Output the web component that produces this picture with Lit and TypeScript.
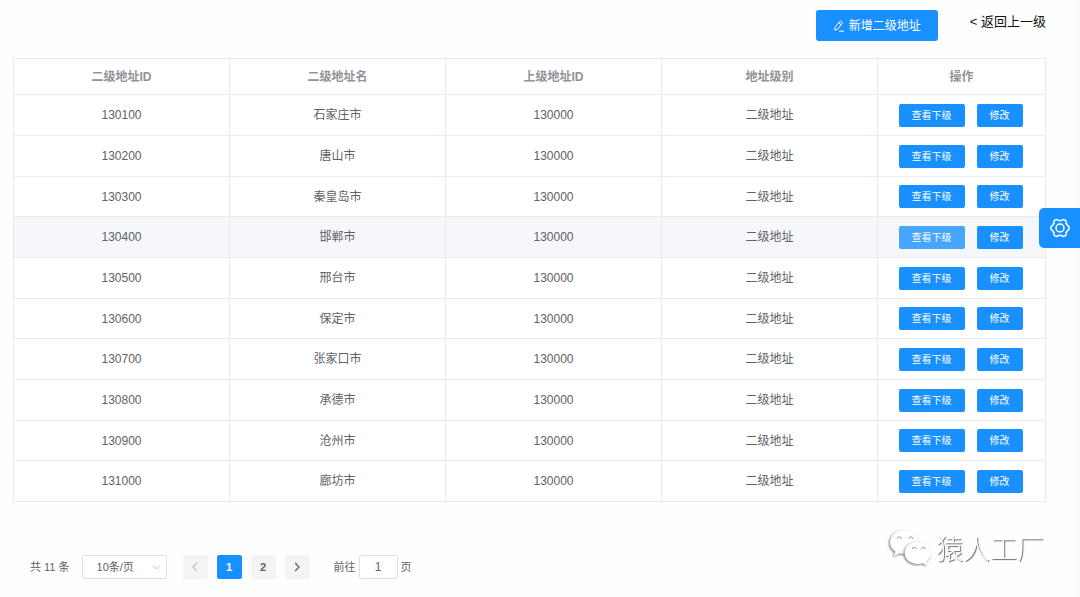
import { LitElement, html, css, svg } from "lit";
import { customElement, state } from "lit/decorators.js";
import { classMap } from "lit/directives/class-map.js";

interface Address { id: string; name: string; parent: string; level: string; }

const names = ["石家庄市", "唐山市", "秦皇岛市", "邯郸市", "邢台市", "保定市", "张家口市", "承德市", "沧州市", "廊坊市"];
const rows: Address[] = names.map((name, i) => ({
  id: String(130100 + i * 100), name, parent: "130000", level: "二级地址",
}));

@customElement("app-root")
export class AppRoot extends LitElement {
  @state() private active = 3;
  @state() private page = 1;

  static styles = css`
    :host {
      display: block;
      box-sizing: border-box;
      min-height: 100vh;
      padding: 10px 34px 0 13px;
      background: linear-gradient(to left, #fafafa, #fefefe 10px);
      color: #606266;
      font: 12px/16px "Liberation Sans", "Noto Sans CJK SC", sans-serif;
    }
    * { box-sizing: border-box; }
    button, input, select { font: inherit; margin: 0; }
    button { border: 0; padding: 0; cursor: pointer; }
    svg { display: block; }
    .toolbar { display: flex; justify-content: flex-end; gap: 32px; height: 48px; }
    .add {
      display: flex; align-items: center; justify-content: center; gap: 4px;
      height: 31px; padding: 0 17px; border-radius: 3px;
      background: #1890ff; color: #fff;
    }
    .back { height: 16px; margin-top: 4px; color: #111; font-size: 13px; text-decoration: none; white-space: nowrap; }
    table { width: 100%; table-layout: fixed; border-collapse: collapse; background: #fff; }
    th, td { padding: 0; border: 1px solid #e8ecf2; text-align: center; }
    th { height: 36px; color: #909399; font-weight: 700; }
    td { height: 41px; }
    tr:nth-child(3n) td { height: 40px; }
    .actions-col { width: 168px; }
    .hover td { background: #f5f7fa; }
    .actions { display: flex; justify-content: center; gap: 12px; padding-right: 2px; }
    .small {
      height: 23px; padding: 0 13px; border-radius: 2px;
      background: #1890ff; color: #fff; font-size: 10px; line-height: 23px;
    }
    .light { background: #46a6ff; }
    .pager { display: flex; align-items: center; margin: 53px 0 0 17px; font-size: 11px; }
    .size { position: relative; margin: 0 16px 0 12px; }
    .size select {
      display: block; appearance: none; width: 85px; height: 24px; padding: 0 14px;
      border: 1px solid #dcdfe6; border-radius: 3px; background: #fff; color: #606266;
    }
    .size svg { position: absolute; right: 6px; top: 8px; pointer-events: none; }
    .pages { display: flex; gap: 9px; }
    .pages button {
      display: grid; place-items: center; width: 25px; height: 24px; border-radius: 2px;
      background: #f4f4f5; color: #606266; font-weight: 700;
    }
    .pages .current { background: #1890ff; color: #fff; }
    .pages button:disabled { color: #c0c4cc; }
    .jump { display: flex; align-items: center; gap: 3px; margin-left: 24px; }
    .jump input {
      width: 39px; height: 24px; padding: 0; border: 1px solid #dcdfe6; border-radius: 3px;
      text-align: center; color: #606266; background: #fff; font-size: 12px;
    }
    .settings {
      position: fixed; right: 0; top: 208px; width: 41px; height: 40px;
      display: grid; place-items: center; border-radius: 5px 0 0 5px;
      background: #1890ff; color: #fff;
    }
    .brand {
      position: fixed; right: 36px; bottom: 31px;
      display: flex; align-items: center; gap: 5px;
      color: #fff; font: 27px/36px "Noto Sans CJK SC", sans-serif; font-weight: 300;
      text-shadow: 1px 1px 1px #666;
    }
    .bubble { fill: #fff; filter: drop-shadow(-1px 1px 1px #777); }
    .eye { fill: none; stroke: #999; stroke-width: 1; }
  `;

  private chevron(d: string) {
    return html`<svg width="10" height="10" viewBox="0 0 10 10" fill="none" stroke="currentColor" stroke-width="1.3" aria-hidden="true">${svg`<path d=${d} />`}</svg>`;
  }

  render() {
    return html`
      <div class="toolbar">
        <button class="add">
          <svg width="12" height="12" viewBox="0 0 12 12" fill="none" stroke="currentColor" aria-hidden="true">
            <path d="M2 7.2 6.5 1.5Q7.4.5 8.5 1.4 9.8 2.4 9 3.5L4.7 9.1 1.8 10.2ZM5.7 2.6 8 4.5M6 11.2H11" />
          </svg>
          新增二级地址
        </button>
        <a class="back" href="#">&lt; 返回上一级</a>
      </div>
      <table>
        <colgroup><col /><col /><col /><col /><col class="actions-col" /></colgroup>
        <thead><tr><th>二级地址ID</th><th>二级地址名</th><th>上级地址ID</th><th>地址级别</th><th>操作</th></tr></thead>
        <tbody>
          ${rows.map((r, i) => html`
            <tr class=${classMap({ hover: i === this.active })} @mouseenter=${() => (this.active = i)}>
              <td>${r.id}</td><td>${r.name}</td><td>${r.parent}</td><td>${r.level}</td>
              <td><div class="actions">
                <button class=${classMap({ small: true, light: i === this.active })}>查看下级</button>
                <button class="small">修改</button>
              </div></td>
            </tr>`)}
        </tbody>
      </table>
      <nav class="pager" aria-label="分页">
        <span>共 11 条</span>
        <div class="size">
          <select aria-label="每页条数"><option>10条/页</option><option>20条/页</option></select>
          <svg width="9" height="9" viewBox="0 0 9 9" fill="none" stroke="#c0c4cc" aria-hidden="true"><path d="M1 2.5 4.5 6 8 2.5" /></svg>
        </div>
        <div class="pages">
          <button aria-label="上一页" ?disabled=${this.page === 1} @click=${() => (this.page = 1)}>${this.chevron("M6.8 1 3 5l3.8 4")}</button>
          ${[1, 2].map((n) => html`<button class=${classMap({ current: n === this.page })} @click=${() => (this.page = n)}>${n}</button>`)}
          <button aria-label="下一页" @click=${() => (this.page = 2)}>${this.chevron("M3.2 1 7 5 3.2 9")}</button>
        </div>
        <label class="jump">前往 <input type="text" inputmode="numeric" .value=${String(this.page)} /> 页</label>
      </nav>
      <button class="settings" aria-label="设置">
        <svg width="20" height="20" viewBox="0 0 20 20" fill="none" stroke="currentColor" stroke-width="1.5" stroke-linejoin="round" aria-hidden="true">
          <path d="M6.500 1.400 8.300 2.400H11.700L13.500 1.400 16 2.900V5L17.600 7.700 19 8.500V11.500L17.600 12.300 16 15V17.100L13.500 18.600 11.700 17.600H8.300L6.500 18.600 4 17.100V15L2.400 12.300 1 11.500V8.500L2.400 7.700 4 5V2.900Z" />
          <circle cx="10" cy="10" r="4" />
        </svg>
      </button>
      <div class="brand">
        <svg width="43" height="37" viewBox="0 0 44 38" overflow="visible" aria-hidden="true">
          <path class="bubble" d="M16.500 1C8 1 2 6.500 2 13.500c0 4.200 2.200 7.600 5.500 9.700L6 28l5.500-3c2 .7 4.500.8 6.500.7L32 12.500C31 5.500 24.500 1 16.500 1Z" />
          <path class="bubble" d="M30.500 13C22.500 13 17 18 17 24.500S22.500 36 30.500 36c1.800 0 3.500-.2 5-.8L40 37.500l-1-4.200c3-2 5-5 5-8.800C44 18 38.500 13 30.500 13Z" />
          <path class="eye" d="M9.500 10.200q0-2.200 2-2.200t2 2.200M21.500 10.200q0-2.200 2-2.200t2 2.200M25 20.700q0-2 1.800-2t1.800 2M34.500 20.700q0-2 1.800-2t1.800 2" />
        </svg>
        <span>猿人工厂</span>
      </div>
    `;
  }
}
